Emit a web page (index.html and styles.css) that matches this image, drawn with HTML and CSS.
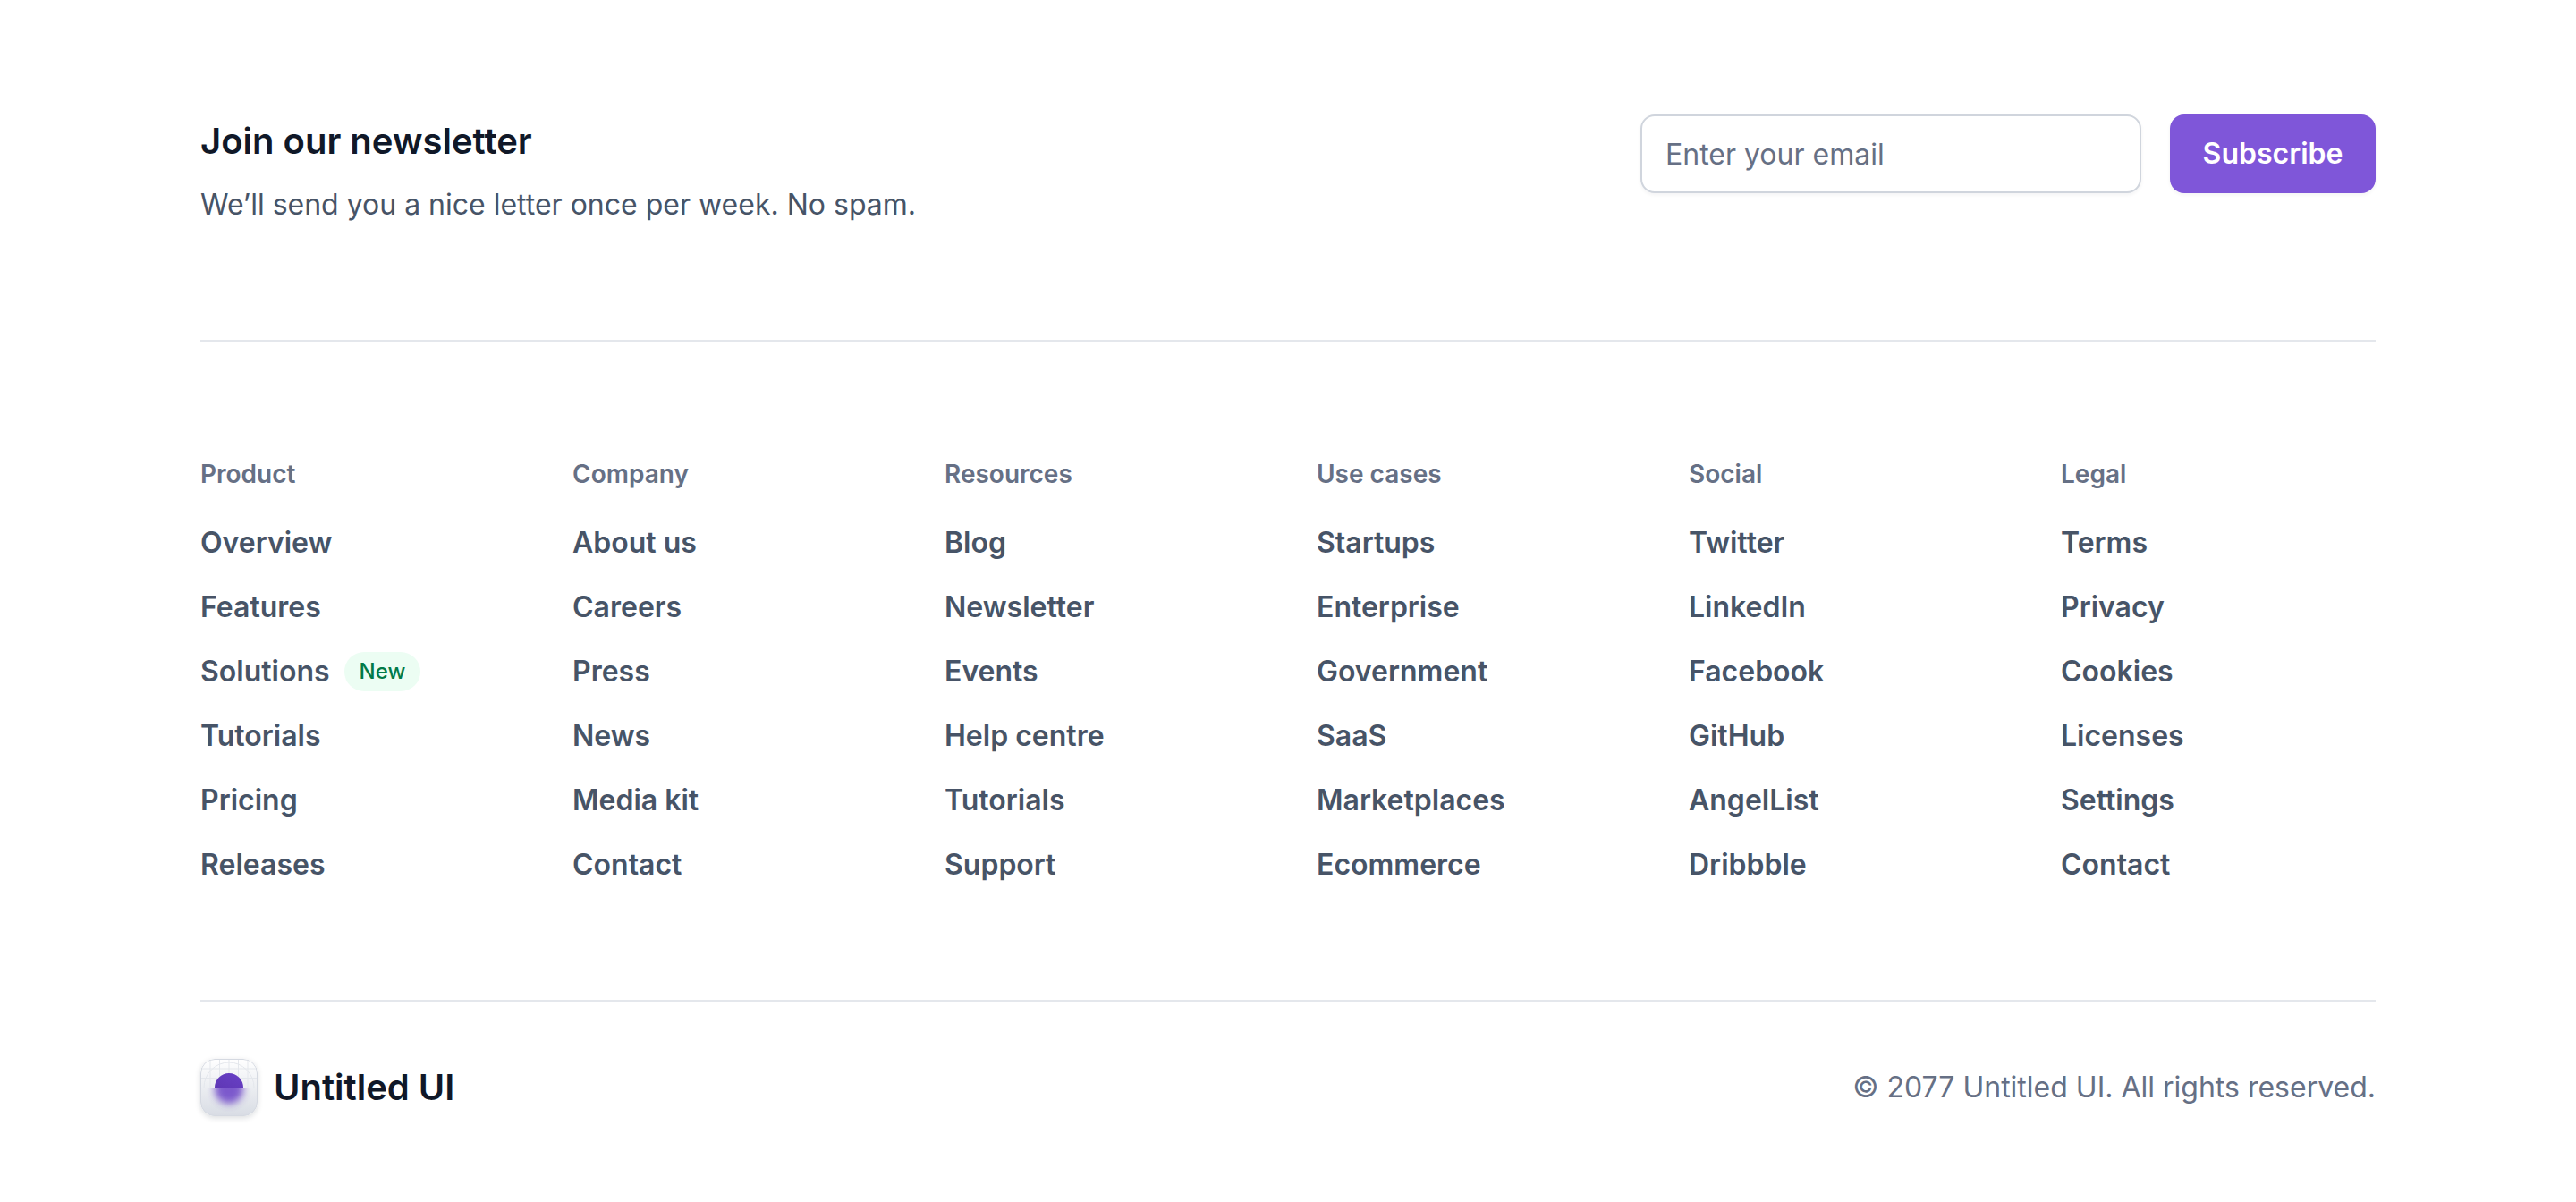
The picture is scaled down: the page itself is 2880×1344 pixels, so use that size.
FILE: index.html
```html
<!DOCTYPE html>
<html lang="en">
<head>
<meta charset="utf-8">
<title>Untitled UI</title>
<link rel="stylesheet" href="styles.css">
</head>
<body>
<footer class="footer">
  <section class="newsletter">
    <div class="newsletter-text">
      <h2 class="newsletter-title">Join our newsletter</h2>
      <p class="newsletter-copy">We’ll send you a nice letter once per week. No spam.</p>
    </div>
    <form class="newsletter-form">
      <input class="email" type="email" aria-label="Email" placeholder="Enter your email">
      <button class="subscribe" type="submit">Subscribe</button>
    </form>
  </section>
  <nav class="links" aria-label="Footer">
    <div class="column">
      <h3 class="heading">Product</h3>
      <ul class="list">
        <li><a href="#">Overview</a></li>
        <li><a href="#">Features</a></li>
        <li class="with-badge"><a href="#">Solutions</a><span class="badge">New</span></li>
        <li><a href="#">Tutorials</a></li>
        <li><a href="#">Pricing</a></li>
        <li><a href="#">Releases</a></li>
      </ul>
    </div>
    <div class="column">
      <h3 class="heading">Company</h3>
      <ul class="list">
        <li><a href="#">About us</a></li>
        <li><a href="#">Careers</a></li>
        <li><a href="#">Press</a></li>
        <li><a href="#">News</a></li>
        <li><a href="#">Media kit</a></li>
        <li><a href="#">Contact</a></li>
      </ul>
    </div>
    <div class="column">
      <h3 class="heading">Resources</h3>
      <ul class="list">
        <li><a href="#">Blog</a></li>
        <li><a href="#">Newsletter</a></li>
        <li><a href="#">Events</a></li>
        <li><a href="#">Help centre</a></li>
        <li><a href="#">Tutorials</a></li>
        <li><a href="#">Support</a></li>
      </ul>
    </div>
    <div class="column">
      <h3 class="heading">Use cases</h3>
      <ul class="list">
        <li><a href="#">Startups</a></li>
        <li><a href="#">Enterprise</a></li>
        <li><a href="#">Government</a></li>
        <li><a href="#">SaaS</a></li>
        <li><a href="#">Marketplaces</a></li>
        <li><a href="#">Ecommerce</a></li>
      </ul>
    </div>
    <div class="column">
      <h3 class="heading">Social</h3>
      <ul class="list">
        <li><a href="#">Twitter</a></li>
        <li><a href="#">LinkedIn</a></li>
        <li><a href="#">Facebook</a></li>
        <li><a href="#">GitHub</a></li>
        <li><a href="#">AngelList</a></li>
        <li><a href="#">Dribbble</a></li>
      </ul>
    </div>
    <div class="column">
      <h3 class="heading">Legal</h3>
      <ul class="list">
        <li><a href="#">Terms</a></li>
        <li><a href="#">Privacy</a></li>
        <li><a href="#">Cookies</a></li>
        <li><a href="#">Licenses</a></li>
        <li><a href="#">Settings</a></li>
        <li><a href="#">Contact</a></li>
      </ul>
    </div>
  </nav>
  <div class="bottom">
    <a class="brand" href="#">
      <svg class="mark" viewBox="0 0 64 64" width="64" height="64" aria-hidden="true">
        <defs>
          <linearGradient id="tile" x1="0" y1="0" x2="0" y2="1"><stop offset="0" stop-color="#fff"/><stop offset="1" stop-color="#d8dce4"/></linearGradient>
          <linearGradient id="dot" x1="1" y1="0" x2="0" y2="1"><stop offset="0" stop-color="#6941c6"/><stop offset="1" stop-color="#5f37b5"/></linearGradient>
          <filter id="soft" x="-50%" y="-50%" width="200%" height="200%"><feGaussianBlur stdDeviation="4"/></filter>
          <clipPath id="base"><rect y="32" width="64" height="32"/></clipPath>
        </defs>
        <rect width="64" height="64" rx="16" fill="url(#tile)"/>
        <g fill="none" stroke="#e4e7ec" stroke-width="1">
          <path d="M11 2V32M21.500 0V32M32 0V32M42.500 0V32M53 2V32M1 11H63M0 21.500H64"/>
          <path d="M4 32a28 28 0 0 1 56 0"/>
        </g>
        <path d="M16 32a16 16 0 0 1 32 0z" fill="url(#dot)"/>
        <g clip-path="url(#base)"><circle cx="32" cy="34" r="16" fill="#6941c6" opacity=".85" filter="url(#soft)"/></g>
        <rect x=".5" y=".5" width="63" height="63" rx="15.500" fill="none" stroke="#d5d9e1"/>
      </svg>
      <span>Untitled UI</span>
    </a>
    <p class="copyright">© 2077 Untitled UI. All rights reserved.</p>
  </div>
</footer>
</body>
</html>
```
FILE: styles.css
```css
* { box-sizing: border-box; }
body { margin: 0; background: #fff; font-family: Inter, sans-serif; font-size: 32px; line-height: 50px; color: #475467; }
h2, h3, p, ul { margin: 0; padding: 0; }
a { color: inherit; text-decoration: none; }
.footer { max-width: 2560px; margin: 0 auto; padding: 128px 64px 96px; }
.newsletter { display: flex; justify-content: space-between; align-items: flex-start; gap: 64px; padding-bottom: 126px; border-bottom: 2px solid #e4e7ec; }
.newsletter-title { font-size: 40px; line-height: 60px; font-weight: 600; color: #101828; margin-bottom: 16px; }
.newsletter-form { display: flex; gap: 32px; }
.email { width: 560px; height: 88px; padding: 0 26px; border: 2px solid #d0d5dd; border-radius: 16px; font: inherit; color: #101828; background: #fff; box-shadow: 0 2px 4px rgba(16, 24, 40, .05); }
.email::placeholder { color: #667085; opacity: 1; }
.subscribe { min-width: 230px; height: 88px; padding: 0 36px; border: 0; border-radius: 16px; background: #7f56d9; color: #fff; font: inherit; font-weight: 600; box-shadow: 0 2px 4px rgba(16, 24, 40, .05); }
.links { display: grid; grid-template-columns: repeat(6, 1fr); gap: 64px; padding: 128px 0 126px; }
.heading { font-size: 28px; line-height: 40px; font-weight: 600; color: #667085; margin-bottom: 32px; }
.list { display: grid; gap: 22px; list-style: none; font-weight: 600; }
.with-badge { display: flex; align-items: center; gap: 16px; }
.badge { height: 44px; padding: 0 17px; border-radius: 22px; background: #ecfdf3; color: #027a48; font-size: 24px; line-height: 44px; font-weight: 500; }
.bottom { display: flex; justify-content: space-between; align-items: center; padding-top: 64px; border-top: 2px solid #e4e7ec; }
.brand { display: flex; align-items: center; gap: 18px; font-size: 40px; font-weight: 600; color: #101828; }
.mark { display: block; border-radius: 16px; box-shadow: 0 2px 6px rgba(16, 24, 40, .15); }
.copyright { color: #667085; }
```
